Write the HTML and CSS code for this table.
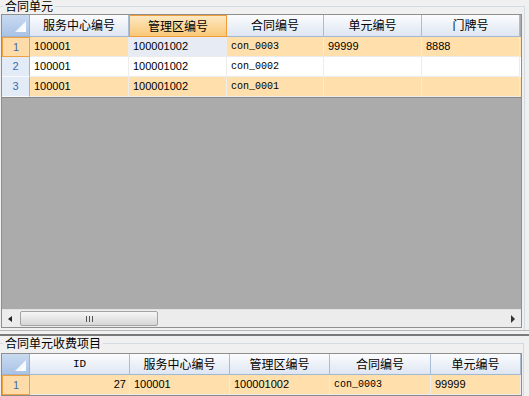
FILE: index.html
```html
<!DOCTYPE html>
<html>
<head>
<meta charset="utf-8">
<link rel="stylesheet" href="styles.css">
</head>
<body>
<div class="app">
  <section class="group group-top">
    <div class="legend">合同单元</div>
    <div class="grid grid-top">
      <div class="hdr cols-top">
        <div class="corner"><svg width="27" height="20" viewBox="0 0 27 20"><defs><linearGradient id="tg" x1="0" y1="0" x2="1" y2="1"><stop offset="0" stop-color="#e6eef8"/><stop offset="1" stop-color="#ffffff"/></linearGradient></defs><polygon points="13,17 24,17 24,6" fill="url(#tg)"/></svg></div>
        <div class="hcell">服务中心编号</div>
        <div class="hcell sel">管理区编号</div>
        <div class="hcell">合同编号</div>
        <div class="hcell">单元编号</div>
        <div class="hcell">门牌号</div>
      </div>
      <div class="row cols-top alt">
        <div class="rh cur">1</div>
        <div class="cell">100001</div>
        <div class="cell curcell">100001002</div>
        <div class="cell mono">con_0003</div>
        <div class="cell">99999</div>
        <div class="cell">8888</div>
      </div>
      <div class="row cols-top">
        <div class="rh">2</div>
        <div class="cell">100001</div>
        <div class="cell">100001002</div>
        <div class="cell mono">con_0002</div>
        <div class="cell"></div>
        <div class="cell"></div>
      </div>
      <div class="row cols-top alt">
        <div class="rh">3</div>
        <div class="cell">100001</div>
        <div class="cell">100001002</div>
        <div class="cell mono">con_0001</div>
        <div class="cell"></div>
        <div class="cell"></div>
      </div>
      <div class="empty"></div>
      <div class="hscroll">
        <div class="arrow-l"></div>
        <div class="thumb"><span class="grip"></span><span class="grip"></span><span class="grip"></span></div>
        <div class="track"></div>
        <div class="arrow-r"></div>
      </div>
    </div>
  </section>
  <div class="splitter"></div>
  <section class="group group-bottom">
    <div class="legend">合同单元收费项目</div>
    <div class="grid grid-bottom">
      <div class="hdr cols-bottom">
        <div class="corner"><svg width="27" height="20" viewBox="0 0 27 20"><defs><linearGradient id="tg2" x1="0" y1="0" x2="1" y2="1"><stop offset="0" stop-color="#e6eef8"/><stop offset="1" stop-color="#ffffff"/></linearGradient></defs><polygon points="13,17 24,17 24,6" fill="url(#tg2)"/></svg></div>
        <div class="hcell mono-h">ID</div>
        <div class="hcell">服务中心编号</div>
        <div class="hcell">管理区编号</div>
        <div class="hcell">合同编号</div>
        <div class="hcell">单元编号</div>
      </div>
      <div class="row cols-bottom alt">
        <div class="rh cur">1</div>
        <div class="cell num">27</div>
        <div class="cell">100001</div>
        <div class="cell">100001002</div>
        <div class="cell mono">con_0003</div>
        <div class="cell">99999</div>
      </div>
    </div>
  </section>
</div>
</body>
</html>
```
FILE: styles.css
```css
* { box-sizing: border-box; }
html, body { margin: 0; padding: 0; }
body {
  width: 529px;
  height: 396px;
  overflow: hidden;
  background: #f0f0f0;
  font-family: "Liberation Sans", "Noto Sans CJK SC", sans-serif;
  font-size: 11px;
  color: #000;
}
.app {
  display: flex;
  flex-direction: column;
  height: 396px;
}
.group {
  border-top: 1px solid #d3dae2;
  border-right: 1px solid #d3dae2;
  display: flex;
  flex-direction: column;
}
.group-top {
  margin: 6px 4px 0 0;
  padding-bottom: 2px;
}
.group-bottom {
  margin: 7px 5px 0 0;
  flex: 1;
}
.legend {
  align-self: flex-start;
  background: #f0f0f0;
  margin: -7px 0 0 3px;
  padding: 0 2px;
  height: 12px;
  line-height: 12px;
  font-family: "Noto Sans CJK SC", sans-serif;
  font-size: 12px;
}
.grid {
  width: 521px;
  margin-left: 1px;
  border: 1px solid #8f8f8f;
  background: #ababab;
  display: flex;
  flex-direction: column;
  overflow: hidden;
}
.grid-top { margin-top: 2px; height: 314px; }
.grid-bottom { margin-top: 4px; height: 44px; border-bottom: 2px solid #8a8a8a; }
.cols-top { grid-template-columns: 28px 99px 98px 97px 98px 98px; }
.cols-bottom { grid-template-columns: 28px 100px 100px 100px 101px 90px; }
.hdr {
  display: grid;
  height: 21px;
  flex: none;
}
.grid-top .hdr { height: 22px; }
.corner {
  background: linear-gradient(#c9daf0, #a9c3e5);
  border-right: 1px solid #9cb3cf;
  border-bottom: 1px solid #9cb3cf;
}
.corner svg { display: block; }
.hcell {
  background: linear-gradient(#fbfcfe, #dee6f2);
  border-right: 1px solid #a9bcd4;
  border-bottom: 1px solid #a3b7d0;
  font-family: "Noto Sans CJK SC", sans-serif;
  font-size: 12px;
  line-height: 20px;
  text-align: center;
  white-space: nowrap;
  overflow: hidden;
}
.hcell.sel {
  background: linear-gradient(#fde8c2, #f9c878);
  border: 1px solid #f19c37;
  line-height: 19px;
}
.hcell.mono-h {
  font-family: "Liberation Mono", monospace;
  font-size: 11px;
}
.row {
  display: grid;
  height: 20px;
  flex: none;
  background: #fff;
}
.row.alt { background: #ffdfac; }
.rh {
  background: #e3ebf6;
  border-right: 1px solid #9db3ce;
  border-bottom: 1px solid #f7f9fc;
  color: #3d6cb0;
  text-align: center;
  line-height: 19px;
}
.rh.cur {
  background: #fddca9;
  border: 1px solid #f0a040;
  line-height: 18px;
}
.cell {
  border-right: 1px solid #ececec;
  border-bottom: 1px solid #ececec;
  padding-left: 4px;
  line-height: 19px;
  white-space: nowrap;
  overflow: hidden;
}
.cell.curcell { background: #e7ebf4; }
.cell.mono {
  font-family: "Liberation Mono", monospace;
  font-size: 10px;
}
.cell.num { text-align: right; padding: 0 3px 0 0; }
.empty {
  flex: 1;
  border-top: 1px solid #8a8a8a;
  background: #ababab;
}
.hscroll {
  height: 18px;
  flex: none;
  background: #ececec;
  border-top: 1px solid #e2e2e2;
  display: flex;
  align-items: center;
}
.arrow-l {
  width: 0; height: 0;
  margin-left: 6px;
  border-top: 3px solid transparent;
  border-bottom: 3px solid transparent;
  border-right: 4px solid #222;
}
.thumb {
  margin-left: 8px;
  width: 138px;
  height: 15px;
  border: 1px solid #a3a3a3;
  border-radius: 2px;
  background: linear-gradient(#f6f6f6, #e6e6e6 50%, #d6d6d6);
  display: flex;
  justify-content: center;
  align-items: center;
  gap: 1px;
}
.grip { width: 1px; height: 6px; background: #555; margin: 0 0.5px; }
.track { flex: 1; }
.arrow-r {
  width: 0; height: 0;
  margin-right: 6px;
  border-top: 4px solid transparent;
  border-bottom: 4px solid transparent;
  border-left: 4px solid #333;
}
.splitter {
  height: 6px;
  flex: none;
  border-top: 1px solid #b9b9b9;
  border-bottom: 2px solid #7a7a7a;
}
```
